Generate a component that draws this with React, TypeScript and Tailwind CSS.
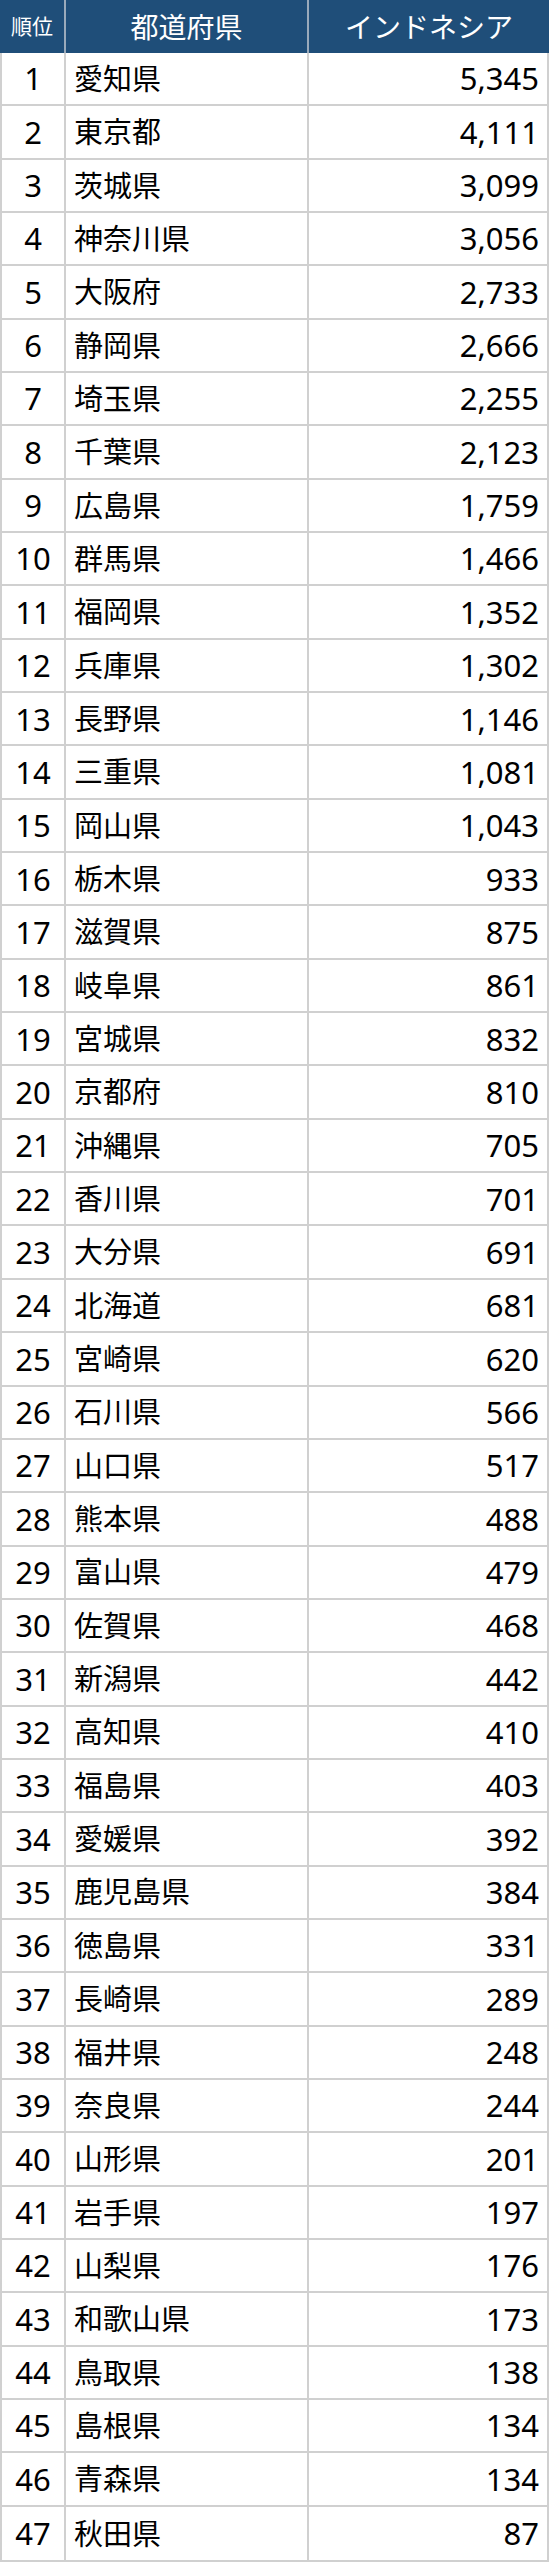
const ROWS: [string, string][] = [
  ['愛知県', '5,345'],
  ['東京都', '4,111'],
  ['茨城県', '3,099'],
  ['神奈川県', '3,056'],
  ['大阪府', '2,733'],
  ['静岡県', '2,666'],
  ['埼玉県', '2,255'],
  ['千葉県', '2,123'],
  ['広島県', '1,759'],
  ['群馬県', '1,466'],
  ['福岡県', '1,352'],
  ['兵庫県', '1,302'],
  ['長野県', '1,146'],
  ['三重県', '1,081'],
  ['岡山県', '1,043'],
  ['栃木県', '933'],
  ['滋賀県', '875'],
  ['岐阜県', '861'],
  ['宮城県', '832'],
  ['京都府', '810'],
  ['沖縄県', '705'],
  ['香川県', '701'],
  ['大分県', '691'],
  ['北海道', '681'],
  ['宮崎県', '620'],
  ['石川県', '566'],
  ['山口県', '517'],
  ['熊本県', '488'],
  ['富山県', '479'],
  ['佐賀県', '468'],
  ['新潟県', '442'],
  ['高知県', '410'],
  ['福島県', '403'],
  ['愛媛県', '392'],
  ['鹿児島県', '384'],
  ['徳島県', '331'],
  ['長崎県', '289'],
  ['福井県', '248'],
  ['奈良県', '244'],
  ['山形県', '201'],
  ['岩手県', '197'],
  ['山梨県', '176'],
  ['和歌山県', '173'],
  ['鳥取県', '138'],
  ['島根県', '134'],
  ['青森県', '134'],
  ['秋田県', '87'],
];

const FONT = { fontFamily: '"Noto Sans", "Noto Sans CJK JP", sans-serif' };

export default function App() {
  return (
    <div className="w-[550px] bg-white" style={FONT}>
      <div className="w-[549px] h-[2562px] grid grid-cols-[64px_243px_1fr] grid-rows-[53px_repeat(47,1fr)] border-2 border-[#d0d0d0] border-t-0">
        <div className="bg-[#1f4e79] text-white text-[21px] flex items-center justify-center border-r-2 border-[#9aaabb] -ml-[2px]">
          順位
        </div>
        <div className="bg-[#1f4e79] text-white text-[28px] flex items-center justify-center border-r-2 border-[#9aaabb]">
          都道府県
        </div>
        <div className="bg-[#1f4e79] text-white text-[28px] flex items-center justify-center -mr-[2px]">
          インドネシア
        </div>
        {ROWS.map(([pref, n], i) => (
          <Row key={pref + i} rank={i + 1} pref={pref} n={n} last={i === ROWS.length - 1} />
        ))}
      </div>
    </div>
  );
}

function Row({ rank, pref, n, last }: { rank: number; pref: string; n: string; last: boolean }) {
  const line = last ? '' : 'border-b-2';
  return (
    <>
      <div className={`flex items-center justify-center text-[31px] text-black border-r-2 border-[#d0d0d0] ${line}`}>
        {rank}
      </div>
      <div className={`flex items-center pl-2 text-[29px] text-black border-r-2 border-[#d0d0d0] ${line}`}>
        {pref}
      </div>
      <div className={`flex items-center justify-end pr-2 text-[31px] text-black border-[#d0d0d0] ${line}`}>
        {n}
      </div>
    </>
  );
}
